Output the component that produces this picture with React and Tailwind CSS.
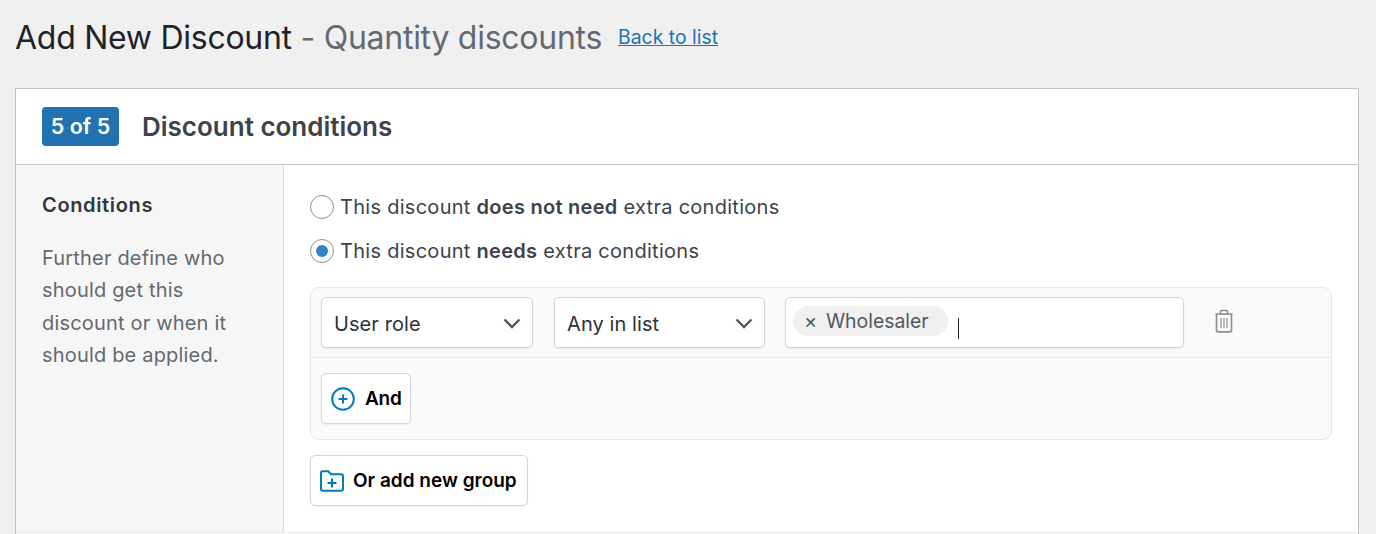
function Radio({ checked, children }) {
    return (
        <label className="flex items-center h-[24px]">
            <span className="w-[24px] h-[24px] rounded-full border border-[#8c8f94] bg-white flex items-center justify-center shrink-0">
                {checked && <span className="w-[12px] h-[12px] rounded-full bg-[#3582c4]" />}
            </span>
            <span className="ml-[6px] text-[20px] tracking-[0.28px] text-[#3c434a]">{children}</span>
        </label>
    );
}

function SelectBox({ width, children }) {
    return (
        <div className={`${width} h-[51px] bg-white border border-[#d3d4de] rounded-[5px] shadow-[0_1px_2px_rgba(0,0,0,0.08)] flex items-center justify-between pl-[12px] pr-[11px] text-[20px] tracking-[0.08px] text-[#2c3338]`}>
            <span className="pt-[2px]">{children}</span>
            <svg className="mt-[1px]" width="18" height="11" viewBox="0 0 18 11" fill="none" stroke="#50575e" strokeWidth="2.4">
                <path d="M1.5 1.5 9 9l7.5-7.5" />
            </svg>
        </div>
    );
}

export default function App() {
    return (
        <div className="h-[534px] overflow-hidden bg-[#f0f0f1] pl-[15px] pr-[17px] font-['Inter',sans-serif]">
            <div className="h-[88px] flex items-start pt-[15px]">
                <h1 className="text-[32px] leading-[46px] tracking-[-0.27px] text-[#1d2327]">
                    Add New Discount <span className="text-[#646970]">- Quantity discounts</span>
                </h1>
                <a href="#" className="ml-[16px] mt-[7px] text-[19.4px] leading-[30px] text-[#2271b1] underline">Back to list</a>
            </div>

            {/* card */}
            <div className="bg-white border border-[#c3c4c7] h-[460px]">
                <div className="h-[76px] border-b border-[#c3c4c7] flex items-center pl-[26px]">
                    <span className="w-[77px] h-[39px] bg-[#2271b1] rounded-[4px] text-white font-semibold text-[21.5px] flex items-center justify-center">5 of 5</span>
                    <h2 className="ml-[23px] text-[26px] font-semibold text-[#3c434a]">Discount conditions</h2>
                </div>

                <div className="flex h-[368px] border-b border-[#ebebeb]">
                    <div className="w-[268px] shrink-0 bg-[#f6f6f6] border-r border-[#dcdcde] pl-[26px] pt-[26px]">
                        <div className="text-[20px] leading-[28px] font-semibold tracking-[0.65px] text-[#32373c]">Conditions</div>
                        <p className="mt-[23px] text-[20px] leading-[32.33px] tracking-[0.18px] text-[#646970] w-[215px]">
                            Further define who should get this discount or when it should be applied.
                        </p>
                    </div>

                    <div className="flex-1 pl-[26px] pr-[26px] pt-[30px]">
                        <Radio>This discount <b className="font-semibold">does not need</b> extra conditions</Radio>
                        <div className="mt-[20px]">
                            <Radio checked>This discount <b className="font-semibold">needs</b> extra conditions</Radio>
                        </div>

                        <div className="mt-[24px] h-[153px] bg-[#fafafa] border border-[#e8e8ea] rounded-[9px]">
                            <div className="h-[70px] border-b border-[#e8e8ea] flex items-start pt-[9px] pl-[10px]">
                                <SelectBox width="w-[212px]">User role</SelectBox>
                                <div className="ml-[21px]"><SelectBox width="w-[211px]">Any in list</SelectBox></div>
                                <div className="ml-[20px] w-[399px] h-[51px] bg-white border border-[#d3d4de] rounded-[5px] shadow-[0_1px_2px_rgba(0,0,0,0.08)] flex items-start pl-[7px] pt-[8px]">
                                    <span className="h-[30px] w-[155px] rounded-full bg-[#f0f0f1] flex items-center pl-[11px] text-[19.4px] text-[#50575e]">
                                        <span className="text-[20px] leading-none w-[22px]">×</span>
                                        <span className="pt-[1px]">Wholesaler</span>
                                    </span>
                                    <span className="ml-[10px] mt-[12px] w-[1px] h-[21px] bg-[#1d2327]" />
                                </div>
                                <svg className="ml-[30px] mt-[12px]" width="20" height="24" viewBox="0 0 20 24" fill="none" stroke="#8c8f94" strokeWidth="1.7">
                                    <path d="M1.500 5h17" />
                                    <path d="M6.500 4.500V2.500c0-.6.4-1 1-1h5c.6 0 1 .4 1 1v2" />
                                    <path d="M2.500 5.500v15.500c0 1 .8 1.800 2 1.800h11c1.200 0 2-.8 2-1.800V5.500" />
                                    <path d="M7 9v10M10 9v10M13 9v10" strokeWidth="1.200" />
                                </svg>
                            </div>
                            <div className="pl-[10px] pt-[15px]">
                                <button className="w-[90px] h-[51px] bg-white border border-[#d3d4de] rounded-[5px] shadow-[0_1px_2px_rgba(0,0,0,0.06)] flex items-center pl-[9px] text-[19px] font-semibold text-black">
                                    <svg width="24" height="24" viewBox="0 0 24 24" fill="none" stroke="#007cba" strokeWidth="2">
                                        <circle cx="12" cy="12" r="10.800" />
                                        <path d="M12 7.500v9M7.500 12h9" />
                                    </svg>
                                    <span className="ml-[10px] pt-[2px] tracking-[-0.2px]">And</span>
                                </button>
                            </div>
                        </div>

                        <button className="mt-[15px] w-[218px] h-[51px] bg-white border border-[#d3d4de] rounded-[5px] shadow-[0_1px_2px_rgba(0,0,0,0.06)] flex items-center pl-[9px] text-[19px] font-semibold text-black">
                            <svg width="24" height="22" viewBox="0 0 24 22" fill="none" stroke="#007cba" strokeWidth="2">
                                <path d="M1 3c0-1 .6-1.800 1.800-1.800h5.400L11 4.200h10.200c1 0 1.800.8 1.800 1.800v13c0 1-.8 1.800-1.800 1.800H2.800C1.800 20.800 1 20 1 19Z" />
                                <path d="M12 8.500v9M7.500 13h9" />
                            </svg>
                            <span className="ml-[9px] pt-[2px]">Or add new group</span>
                        </button>
                    </div>
                </div>
            </div>
        </div>
    );
}
